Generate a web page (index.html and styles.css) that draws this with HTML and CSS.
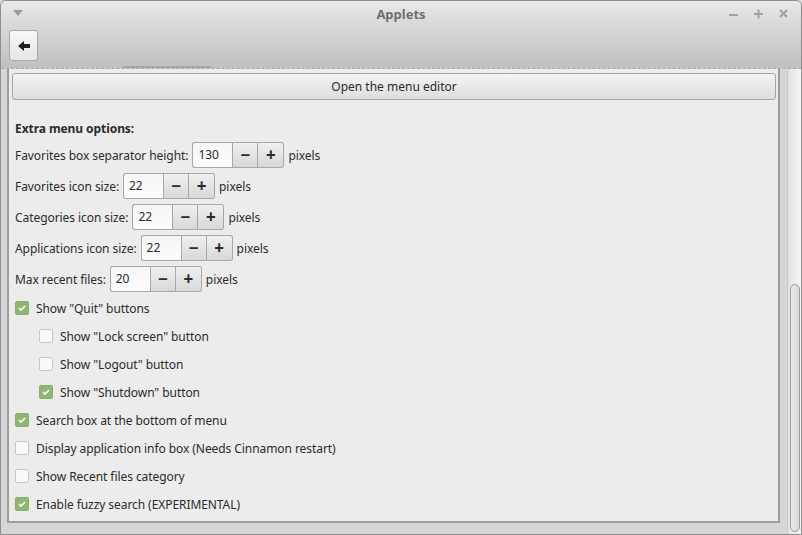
FILE: index.html
```html
<!DOCTYPE html>
<html>
<head>
<meta charset="utf-8">
<link rel="stylesheet" href="styles.css">
</head>
<body>
<div class="window">
  <div class="header">
    <div class="titlebar">
      <div class="tb-left"><svg class="menu-arrow" width="10" height="6" viewBox="0 0 10 6"><path d="M0 0h10L5 6z" fill="#9c9c9c"/></svg></div>
      <div class="title">Applets</div>
      <div class="controls">
        <svg width="10" height="10" viewBox="0 0 10 10"><rect x="0" y="5" width="9" height="2" fill="#a2a2a2"/></svg>
        <svg width="10" height="10" viewBox="0 0 10 10"><rect x="0" y="4" width="9" height="2" fill="#a2a2a2"/><rect x="3.5" y="0.5" width="2" height="9" fill="#a2a2a2"/></svg>
        <svg width="10" height="10" viewBox="0 0 10 10"><path d="M1 1l7 7M8 1L1 8" stroke="#a2a2a2" stroke-width="2.2"/></svg>
      </div>
    </div>
    <div class="toolbar">
      <button class="back-btn"><svg width="12" height="10" viewBox="0 0 12 10"><path d="M0 5L6 0v3h6v4H6v3z" fill="#1e1e1e"/></svg></button>
    </div>
  </div>
  <div class="main">
    <div class="gutter-left"></div>
    <div class="frame">
      <div class="scroll-stub"></div>
      <div class="content">
        <button class="wide-btn">Open the menu editor</button>
        <div class="heading">Extra menu options:</div>
        <div class="spin-rows">
          <div class="spin-row"><span>Favorites box separator height:</span><div class="spin"><div class="entry">130</div><div class="sbtn">−</div><div class="sbtn">+</div></div><span>pixels</span></div>
          <div class="spin-row"><span>Favorites icon size:</span><div class="spin"><div class="entry">22</div><div class="sbtn">−</div><div class="sbtn">+</div></div><span>pixels</span></div>
          <div class="spin-row"><span>Categories icon size:</span><div class="spin"><div class="entry">22</div><div class="sbtn">−</div><div class="sbtn">+</div></div><span>pixels</span></div>
          <div class="spin-row"><span>Applications icon size:</span><div class="spin"><div class="entry">22</div><div class="sbtn">−</div><div class="sbtn">+</div></div><span>pixels</span></div>
          <div class="spin-row"><span>Max recent files:</span><div class="spin"><div class="entry">20</div><div class="sbtn">−</div><div class="sbtn">+</div></div><span>pixels</span></div>
        </div>
        <div class="checks">
          <div class="check-row"><span class="cb checked"><svg viewBox="0 0 14 14"><path d="M3.5 7.2l2.4 2.3 4.6-4.8" fill="none" stroke="#fff" stroke-width="1.8"/></svg></span>Show "Quit" buttons</div>
          <div class="check-row indent"><span class="cb"></span>Show "Lock screen" button</div>
          <div class="check-row indent"><span class="cb"></span>Show "Logout" button</div>
          <div class="check-row indent"><span class="cb checked"><svg viewBox="0 0 14 14"><path d="M3.5 7.2l2.4 2.3 4.6-4.8" fill="none" stroke="#fff" stroke-width="1.8"/></svg></span>Show "Shutdown" button</div>
          <div class="check-row"><span class="cb checked"><svg viewBox="0 0 14 14"><path d="M3.5 7.2l2.4 2.3 4.6-4.8" fill="none" stroke="#fff" stroke-width="1.8"/></svg></span>Search box at the bottom of menu</div>
          <div class="check-row"><span class="cb"></span>Display application info box (Needs Cinnamon restart)</div>
          <div class="check-row"><span class="cb"></span>Show Recent files category</div>
          <div class="check-row"><span class="cb checked"><svg viewBox="0 0 14 14"><path d="M3.5 7.2l2.4 2.3 4.6-4.8" fill="none" stroke="#fff" stroke-width="1.8"/></svg></span>Enable fuzzy search (EXPERIMENTAL)</div>
        </div>
      </div>
    </div>
    <div class="gutter-right"></div>
    <div class="scrollbar"><div class="slider"></div></div>
  </div>
</div>
</body>
</html>
```
FILE: styles.css
```css
* { box-sizing: border-box; }
html, body { margin: 0; padding: 0; }
body {
  width: 802px;
  height: 535px;
  overflow: hidden;
  font-family: "Noto Sans", "DejaVu Sans", sans-serif;
  font-size: 12px;
  letter-spacing: -0.07px;
  color: #2b2b2b;
  background: #d6d6d6;
}
.window {
  width: 802px;
  height: 535px;
  display: flex;
  flex-direction: column;
  border: 1px solid #8e8e8e;
  border-radius: 6px 6px 0 0;
  overflow: hidden;
  background: #d6d6d6;
}
.header {
  height: 67px;
  flex: none;
  background: linear-gradient(#e9e9e9, #d9d9d9 35%, #c0c0c0);
  display: flex;
  flex-direction: column;
}
.titlebar {
  height: 27px;
  display: grid;
  grid-template-columns: 1fr auto 1fr;
  align-items: center;
  padding: 0 12px 0 12px;
}
.tb-left { display: flex; align-items: center; }
.menu-arrow { display: block; margin-top: -3px; }
.title {
  text-align: center;
  font-weight: bold;
  font-size: 13px;
  letter-spacing: 0;
  color: #6f6f6f;
  margin-top: -1px;
}
.controls {
  display: flex;
  justify-content: flex-end;
  gap: 15px;
  align-items: center;
  margin-top: -2px;
}
.controls svg { display: block; }
.toolbar {
  padding: 2px 0 0 8px;
}
.back-btn {
  width: 29px;
  height: 31px;
  border: 1px solid #a9a9a9;
  border-radius: 3px;
  background: linear-gradient(#f7f7f7, #e6e6e6);
  display: flex;
  align-items: center;
  justify-content: center;
  padding: 0;
}
.back-btn svg { display: block; }
.main {
  flex: 1;
  display: flex;
  border-top: 1px dashed #a8a8a8;
  position: relative;
}
.gutter-left { width: 6px; flex: none; background: #d6d6d6; }
.frame {
  width: 773px;
  flex: none;
  margin-bottom: 11px;
  background: #ececec;
  border-left: 2px solid #9c9c9c;
  border-right: 2px solid #9c9c9c;
  border-bottom: 2px solid #9c9c9c;
  position: relative;
}
.scroll-stub {
  position: absolute;
  left: 114px;
  top: -3px;
  width: 88px;
  height: 2px;
  background: #a6a6a6;
}
.gutter-right { width: 7px; flex: none; background: #d6d6d6; }
.scrollbar {
  flex: 1;
  background: linear-gradient(90deg, #e2e2e2, #f6f6f6);
  border-left: 1px solid #c8c8c8;
  position: relative;
}
.slider {
  position: absolute;
  left: 2px;
  width: 10px;
  top: 215px;
  bottom: 2px;
  border: 1px solid #9e9e9e;
  border-radius: 5px;
  background: linear-gradient(90deg, #e9e9e9, #d8d8d8);
}
.content {
  padding: 4px 2px 0 3px;
}
.wide-btn {
  display: block;
  width: 100%;
  height: 27px;
  border: 1px solid #a4a4a4;
  border-radius: 3px;
  background: linear-gradient(#f4f4f4, #dedede);
  font-family: inherit;
  font-size: 12px;
  color: #2b2b2b;
  padding: 0;
}
.heading {
  font-weight: bold;
  margin: 20px 0 0 3px;
  height: 18px;
  line-height: 18px;
}
.spin-rows {
  display: flex;
  flex-direction: column;
  gap: 5px;
  margin-top: 4px;
  padding-left: 3px;
}
.spin-row {
  display: flex;
  align-items: center;
  height: 26px;
  gap: 4px;
}
.spin {
  display: flex;
  height: 26px;
}
.entry {
  width: 40px;
  border: 1px solid #a8a8a8;
  border-right: none;
  border-radius: 3px 0 0 3px;
  background: linear-gradient(#f6f6f6, #fcfcfc);
  padding-left: 5px;
  line-height: 24px;
}
.sbtn {
  width: 26px;
  border: 1px solid #a8a8a8;
  background: linear-gradient(#f0f0f0, #d8d8d8);
  text-align: center;
  line-height: 23px;
  font-size: 17px;
  font-weight: bold;
  color: #2a2a2a;
}
.sbtn + .sbtn { border-left: none; border-radius: 0 3px 3px 0; }
.checks {
  margin-top: 2px;
  display: flex;
  flex-direction: column;
}
.check-row {
  height: 28px;
  display: flex;
  align-items: center;
  padding-left: 3px;
}
.check-row.indent { padding-left: 27px; }
.cb {
  width: 14px;
  height: 14px;
  border: 1px solid #c6c6c6;
  border-radius: 2px;
  background: #fafafa;
  margin-right: 7px;
  flex: none;
  display: flex;
}
.cb.checked {
  background: #8fb673;
  border-color: #86ad6b;
}
.cb svg { width: 12px; height: 12px; display: block; }
```
